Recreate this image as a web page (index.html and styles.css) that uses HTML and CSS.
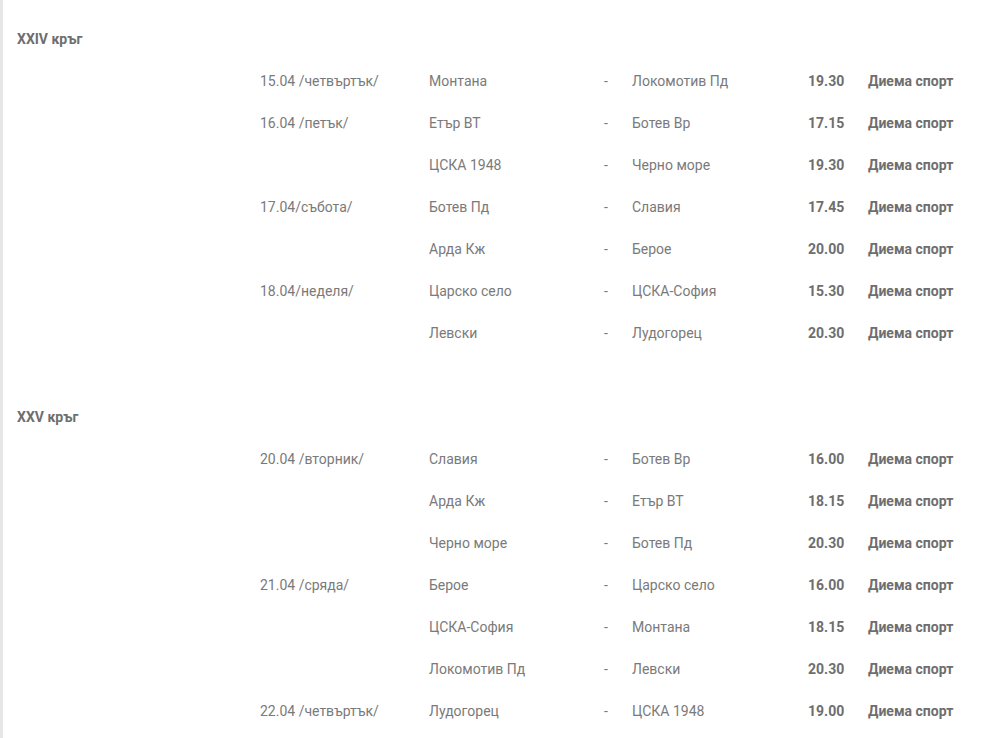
FILE: index.html
```html
<!DOCTYPE html>
<html lang="bg">
<head>
<meta charset="utf-8">
<link rel="stylesheet" href="styles.css">
</head>
<body>
<div class="page">
  <section class="round">
    <h3 class="round-title">XXIV кръг</h3>
    <div class="row"><span></span><span class="date">15.04 /четвъртък/</span><span>Монтана</span><span class="dash">-</span><span>Локомотив Пд</span><span class="time">19.30</span><span class="tv">Диема спорт</span></div>
    <div class="row"><span></span><span class="date">16.04 /петък/</span><span>Етър ВТ</span><span class="dash">-</span><span>Ботев Вр</span><span class="time">17.15</span><span class="tv">Диема спорт</span></div>
    <div class="row"><span></span><span class="date"></span><span>ЦСКА 1948</span><span class="dash">-</span><span>Черно море</span><span class="time">19.30</span><span class="tv">Диема спорт</span></div>
    <div class="row"><span></span><span class="date">17.04/събота/</span><span>Ботев Пд</span><span class="dash">-</span><span>Славия</span><span class="time">17.45</span><span class="tv">Диема спорт</span></div>
    <div class="row"><span></span><span class="date"></span><span>Арда Кж</span><span class="dash">-</span><span>Берое</span><span class="time">20.00</span><span class="tv">Диема спорт</span></div>
    <div class="row"><span></span><span class="date">18.04/неделя/</span><span>Царско село</span><span class="dash">-</span><span>ЦСКА-София</span><span class="time">15.30</span><span class="tv">Диема спорт</span></div>
    <div class="row"><span></span><span class="date"></span><span>Левски</span><span class="dash">-</span><span>Лудогорец</span><span class="time">20.30</span><span class="tv">Диема спорт</span></div>
  </section>
  <section class="round">
    <h3 class="round-title">XXV кръг</h3>
    <div class="row"><span></span><span class="date">20.04 /вторник/</span><span>Славия</span><span class="dash">-</span><span>Ботев Вр</span><span class="time">16.00</span><span class="tv">Диема спорт</span></div>
    <div class="row"><span></span><span class="date"></span><span>Арда Кж</span><span class="dash">-</span><span>Етър ВТ</span><span class="time">18.15</span><span class="tv">Диема спорт</span></div>
    <div class="row"><span></span><span class="date"></span><span>Черно море</span><span class="dash">-</span><span>Ботев Пд</span><span class="time">20.30</span><span class="tv">Диема спорт</span></div>
    <div class="row"><span></span><span class="date">21.04 /сряда/</span><span>Берое</span><span class="dash">-</span><span>Царско село</span><span class="time">16.00</span><span class="tv">Диема спорт</span></div>
    <div class="row"><span></span><span class="date"></span><span>ЦСКА-София</span><span class="dash">-</span><span>Монтана</span><span class="time">18.15</span><span class="tv">Диема спорт</span></div>
    <div class="row"><span></span><span class="date"></span><span>Локомотив Пд</span><span class="dash">-</span><span>Левски</span><span class="time">20.30</span><span class="tv">Диема спорт</span></div>
    <div class="row"><span></span><span class="date">22.04 /четвъртък/</span><span>Лудогорец</span><span class="dash">-</span><span>ЦСКА 1948</span><span class="time">19.00</span><span class="tv">Диема спорт</span></div>
  </section>
</div>
</body>
</html>
```
FILE: styles.css
```css
html, body {
  margin: 0;
  padding: 0;
  background: #fff;
}
body {
  font-family: Roboto, "Noto Sans", sans-serif;
  font-size: 14px;
  color: #7a7a7a;
}
.page {
  border-left: 3px solid #e6e6e6;
  padding: 18px 0 0 14px;
  min-height: 738px;
  box-sizing: border-box;
}
.round {
  margin-bottom: 42px;
}
.round-title {
  margin: 0;
  height: 42px;
  line-height: 42px;
  font-size: 14px;
  font-weight: 700;
  color: #6e6e6e;
}
.row {
  display: grid;
  grid-template-columns: 243px 169px 175px 28px 176px 60px auto;
  height: 42px;
  align-items: center;
  line-height: 20px;
}
.time, .tv {
  font-weight: 700;
  color: #6e6e6e;
}
```
